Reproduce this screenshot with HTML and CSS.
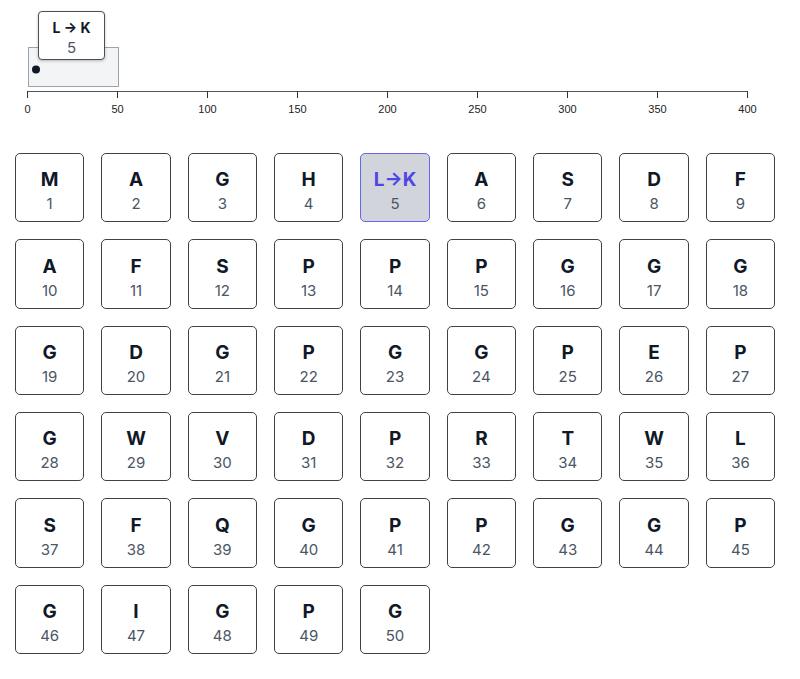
FILE: index.html
```html
<!DOCTYPE html>
<html>
<head>
<meta charset="utf-8">
<link rel="stylesheet" href="styles.css">
</head>
<body>
<div class="chart">
  <svg class="axis" width="800" height="130" viewBox="0 0 800 130">
    <rect x="28.5" y="47.5" width="90" height="39" fill="#f3f4f6" stroke="#9ca3af" stroke-width="1"/>
    <circle cx="36" cy="69.5" r="4" fill="#111827"/>
    <line x1="27" y1="91.5" x2="748" y2="91.5" stroke="#555" stroke-width="1"/>
    <g stroke="#333" stroke-width="1">
      <line x1="27.5" y1="91" x2="27.5" y2="98"/>
      <line x1="117.5" y1="91" x2="117.5" y2="98"/>
      <line x1="207.5" y1="91" x2="207.5" y2="98"/>
      <line x1="297.5" y1="91" x2="297.5" y2="98"/>
      <line x1="387.5" y1="91" x2="387.5" y2="98"/>
      <line x1="477.5" y1="91" x2="477.5" y2="98"/>
      <line x1="567.5" y1="91" x2="567.5" y2="98"/>
      <line x1="657.5" y1="91" x2="657.5" y2="98"/>
      <line x1="747.5" y1="91" x2="747.5" y2="98"/>
    </g>
    <g class="ticklabels" text-anchor="middle">
      <text x="27.5" y="113">0</text>
      <text x="117.5" y="113">50</text>
      <text x="207.5" y="113">100</text>
      <text x="297.5" y="113">150</text>
      <text x="387.5" y="113">200</text>
      <text x="477.5" y="113">250</text>
      <text x="567.5" y="113">300</text>
      <text x="657.5" y="113">350</text>
      <text x="747.5" y="113">400</text>
    </g>
  </svg>
  <div class="tooltip">
    <div class="tip-title">L → K</div>
    <div class="tip-num">5</div>
  </div>
</div>
<div class="grid">
  <div class="card"><div class="ch">M</div><div class="num">1</div></div>
  <div class="card"><div class="ch">A</div><div class="num">2</div></div>
  <div class="card"><div class="ch">G</div><div class="num">3</div></div>
  <div class="card"><div class="ch">H</div><div class="num">4</div></div>
  <div class="card active"><div class="ch">L→K</div><div class="num">5</div></div>
  <div class="card"><div class="ch">A</div><div class="num">6</div></div>
  <div class="card"><div class="ch">S</div><div class="num">7</div></div>
  <div class="card"><div class="ch">D</div><div class="num">8</div></div>
  <div class="card"><div class="ch">F</div><div class="num">9</div></div>
  <div class="card"><div class="ch">A</div><div class="num">10</div></div>
  <div class="card"><div class="ch">F</div><div class="num">11</div></div>
  <div class="card"><div class="ch">S</div><div class="num">12</div></div>
  <div class="card"><div class="ch">P</div><div class="num">13</div></div>
  <div class="card"><div class="ch">P</div><div class="num">14</div></div>
  <div class="card"><div class="ch">P</div><div class="num">15</div></div>
  <div class="card"><div class="ch">G</div><div class="num">16</div></div>
  <div class="card"><div class="ch">G</div><div class="num">17</div></div>
  <div class="card"><div class="ch">G</div><div class="num">18</div></div>
  <div class="card"><div class="ch">G</div><div class="num">19</div></div>
  <div class="card"><div class="ch">D</div><div class="num">20</div></div>
  <div class="card"><div class="ch">G</div><div class="num">21</div></div>
  <div class="card"><div class="ch">P</div><div class="num">22</div></div>
  <div class="card"><div class="ch">G</div><div class="num">23</div></div>
  <div class="card"><div class="ch">G</div><div class="num">24</div></div>
  <div class="card"><div class="ch">P</div><div class="num">25</div></div>
  <div class="card"><div class="ch">E</div><div class="num">26</div></div>
  <div class="card"><div class="ch">P</div><div class="num">27</div></div>
  <div class="card"><div class="ch">G</div><div class="num">28</div></div>
  <div class="card"><div class="ch">W</div><div class="num">29</div></div>
  <div class="card"><div class="ch">V</div><div class="num">30</div></div>
  <div class="card"><div class="ch">D</div><div class="num">31</div></div>
  <div class="card"><div class="ch">P</div><div class="num">32</div></div>
  <div class="card"><div class="ch">R</div><div class="num">33</div></div>
  <div class="card"><div class="ch">T</div><div class="num">34</div></div>
  <div class="card"><div class="ch">W</div><div class="num">35</div></div>
  <div class="card"><div class="ch">L</div><div class="num">36</div></div>
  <div class="card"><div class="ch">S</div><div class="num">37</div></div>
  <div class="card"><div class="ch">F</div><div class="num">38</div></div>
  <div class="card"><div class="ch">Q</div><div class="num">39</div></div>
  <div class="card"><div class="ch">G</div><div class="num">40</div></div>
  <div class="card"><div class="ch">P</div><div class="num">41</div></div>
  <div class="card"><div class="ch">P</div><div class="num">42</div></div>
  <div class="card"><div class="ch">G</div><div class="num">43</div></div>
  <div class="card"><div class="ch">G</div><div class="num">44</div></div>
  <div class="card"><div class="ch">P</div><div class="num">45</div></div>
  <div class="card"><div class="ch">G</div><div class="num">46</div></div>
  <div class="card"><div class="ch">I</div><div class="num">47</div></div>
  <div class="card"><div class="ch">G</div><div class="num">48</div></div>
  <div class="card"><div class="ch">P</div><div class="num">49</div></div>
  <div class="card"><div class="ch">G</div><div class="num">50</div></div>
</div>
</body>
</html>
```

FILE: styles.css
```css
html, body {
  margin: 0;
  padding: 0;
  background: #ffffff;
  font-family: Inter, "Noto Sans", sans-serif;
  color: #111827;
}

.chart {
  position: relative;
  height: 130px;
}

.axis {
  display: block;
}

.ticklabels {
  font-family: "Liberation Sans", Arial, sans-serif;
  font-size: 11px;
  fill: #222;
}

.tooltip {
  position: absolute;
  left: 38px;
  top: 11px;
  width: 67px;
  height: 49px;
  box-sizing: border-box;
  padding-top: 6px;
  background: #ffffff;
  border: 1px solid #4b4f57;
  border-radius: 4px;
  box-shadow: 0 1px 3px rgba(0, 0, 0, 0.25);
  display: flex;
  flex-direction: column;
  align-items: center;
}

.tip-title {
  font-size: 14px;
  font-weight: 700;
  line-height: 20px;
  color: #111827;
}

.tip-num {
  font-size: 15px;
  line-height: 19px;
  color: #4b5563;
}

.grid {
  display: grid;
  grid-template-columns: repeat(9, 1fr);
  gap: 17px;
  width: 760px;
  padding: 23px 0 0 15px;
}

.card {
  aspect-ratio: 1 / 1;
  box-sizing: border-box;
  border: 1px solid #3f4249;
  border-radius: 5px;
  background: #ffffff;
  display: flex;
  flex-direction: column;
  align-items: center;
  justify-content: center;
  padding-top: 9px;
}

.ch {
  font-size: 19px;
  font-weight: 700;
  line-height: 24px;
  color: #111827;
}

.num {
  font-size: 15px;
  line-height: 24px;
  color: #4b5563;
}

.card.active {
  background: #d1d5db;
  border-color: #6366f1;
}

.card.active .ch {
  color: #4f46e5;
}
```
